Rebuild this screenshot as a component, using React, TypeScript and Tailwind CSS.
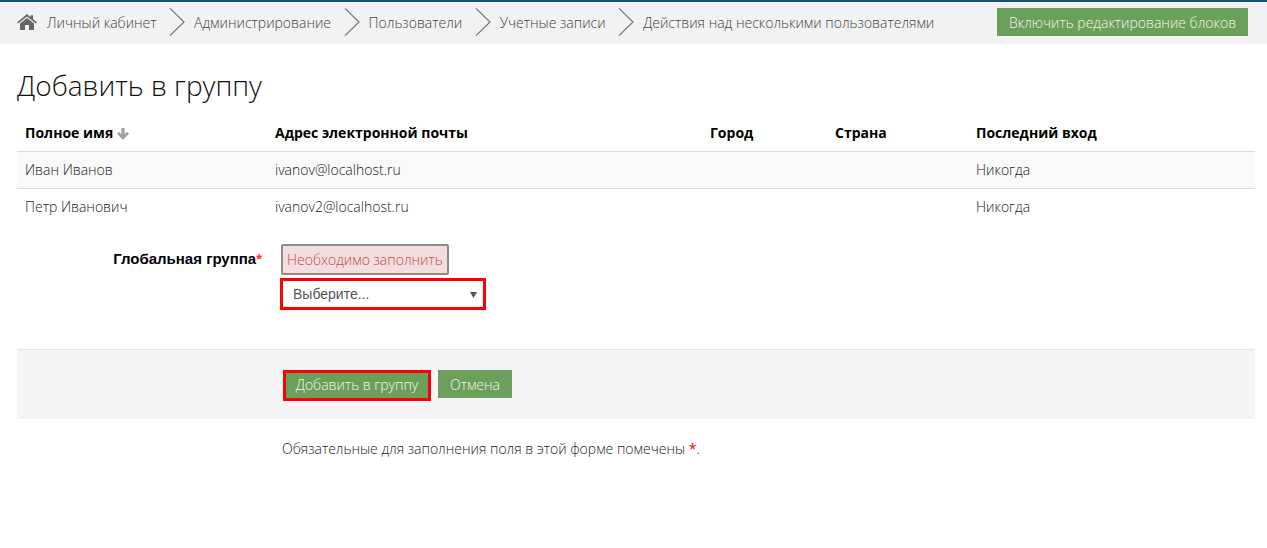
import React from "react";

const crumbs = ["Администрирование", "Пользователи", "Учетные записи", "Действия над несколькими пользователями"];

function Chevron() {
  return (
    <svg width="24" height="28" viewBox="0 0 24 28" className="shrink-0" fill="none" stroke="#757575" strokeWidth="1.2">
      <path d="M5 0.4 L19 14 L5 27.6" />
    </svg>
  );
}

function Home() {
  return (
    <svg width="20" height="16" viewBox="0 0 20 16" className="shrink-0">
      <path fill="#666" d="M10 0 L13.6 3 V1.2 H16 V5 L20 8.4 L18.8 9.6 L10 2.4 L1.2 9.6 L0 8.4 Z" />
      <path fill="#666" d="M10 4 L17 9.6 V16 H12 V11 H8 V16 H3 V9.6 Z" />
    </svg>
  );
}

const rows = [
  { name: "Иван Иванов", email: "ivanov@localhost.ru", bg: "bg-[#f9f9f9]" },
  { name: "Петр Иванович", email: "ivanov2@localhost.ru", bg: "bg-white" },
];

const cols = "grid grid-cols-[250px_435px_125px_141px_1fr] px-2 items-center";

export default function App() {
  return (
    <div className="min-h-[548px] bg-white text-[14px] font-light text-[#222] font-['Open_Sans',sans-serif]">
      <header className="h-[44px] border-t-[2px] border-[#1a5276] bg-[#f2f2f2] flex items-center pl-[17px] pr-[19px] pb-[2px]">
        <Home />
        <span className="ml-[10px] text-[#444]">Личный кабинет</span>
        {crumbs.map((c) => (
          <React.Fragment key={c}>
            <span className="ml-[8.5px] mr-[5px] flex"><Chevron /></span>
            <span className="text-[#444] whitespace-nowrap">{c}</span>
          </React.Fragment>
        ))}
        <button className="ml-auto h-[28px] w-[251px] bg-[#6aa05b] text-[#f2f6e6] whitespace-nowrap">
          Включить редактирование блоков
        </button>
      </header>

      <main className="px-[17px] pr-[12px]">
        <h1 className="mt-[22px] text-[28px] leading-[38px] font-light text-[#111]">Добавить в группу</h1>

        <div className={`${cols} h-[43px] mt-[4px] pt-[5px] font-bold text-black`}>
          <div className="flex items-center gap-1">
            Полное имя
            <svg width="12" height="12" viewBox="0 0 12 12" className="mt-[4px]">
              <path fill="#a3a3a3" d="M4.4 0 H7.6 V6 L10 3.8 L12 5.8 L6 12 L0 5.8 L2 3.8 L4.4 6 Z" />
            </svg>
          </div>
          <div>Адрес электронной почты</div>
          <div>Город</div>
          <div>Страна</div>
          <div>Последний вход</div>
        </div>

        {rows.map((r) => (
          <div key={r.email} className={`${cols} h-[37px] pb-[2px] border-t border-[#dcdcdc] ${r.bg}`}>
            <div>{r.name}</div>
            <div>{r.email}</div>
            <div></div>
            <div></div>
            <div>Никогда</div>
          </div>
        ))}

        <div className="flex mt-[19px] h-[106px] border-b border-[#e5e5e5]">
          <div className="w-[245px] pt-[7px] text-right font-['Liberation_Sans',sans-serif] text-[15px] font-bold text-black leading-[16px] h-fit">
            Глобальная группа<span className="text-[#ff3030]">*</span>
          </div>
          <div className="ml-[19px] flex flex-col items-start">
            <div className="h-[31px] px-[4px] flex items-center rounded-[2px] border-2 border-[#8e8a8a] bg-[#f2dede] text-[#c9484a] whitespace-nowrap">
              Необходимо заполнить
            </div>
            <div className="-ml-px mt-[3px] w-[206px] h-[32px] border-[3px] border-[#ff0000] flex items-center justify-between pl-[10px] pr-[6px] font-['Liberation_Sans',sans-serif] font-normal text-[#555]">
              <span>Выберите...</span>
              <svg width="7" height="7" viewBox="0 0 7 7"><path fill="#555" d="M0 1 H7 L3.5 7 Z" /></svg>
            </div>
          </div>
        </div>

        <div className="h-[69px] pt-[20px] bg-[#f4f4f4] flex items-start pl-[266px] gap-[7px]">
          <button className="h-[31px] w-[148px] pb-[3px] border-[3px] border-[#ff0000] bg-[#6aa05b] text-[#f2f6e6]">Добавить в группу</button>
          <button className="h-[28px] w-[74px] bg-[#6aa05b] text-[#f2f6e6]">Отмена</button>
        </div>

        <p className="mt-[20px] ml-[265px] leading-[20px]">
          Обязательные для заполнения поля в этой форме помечены <span className="text-[#ff0000] font-normal">*</span>.
        </p>
      </main>
    </div>
  );
}
